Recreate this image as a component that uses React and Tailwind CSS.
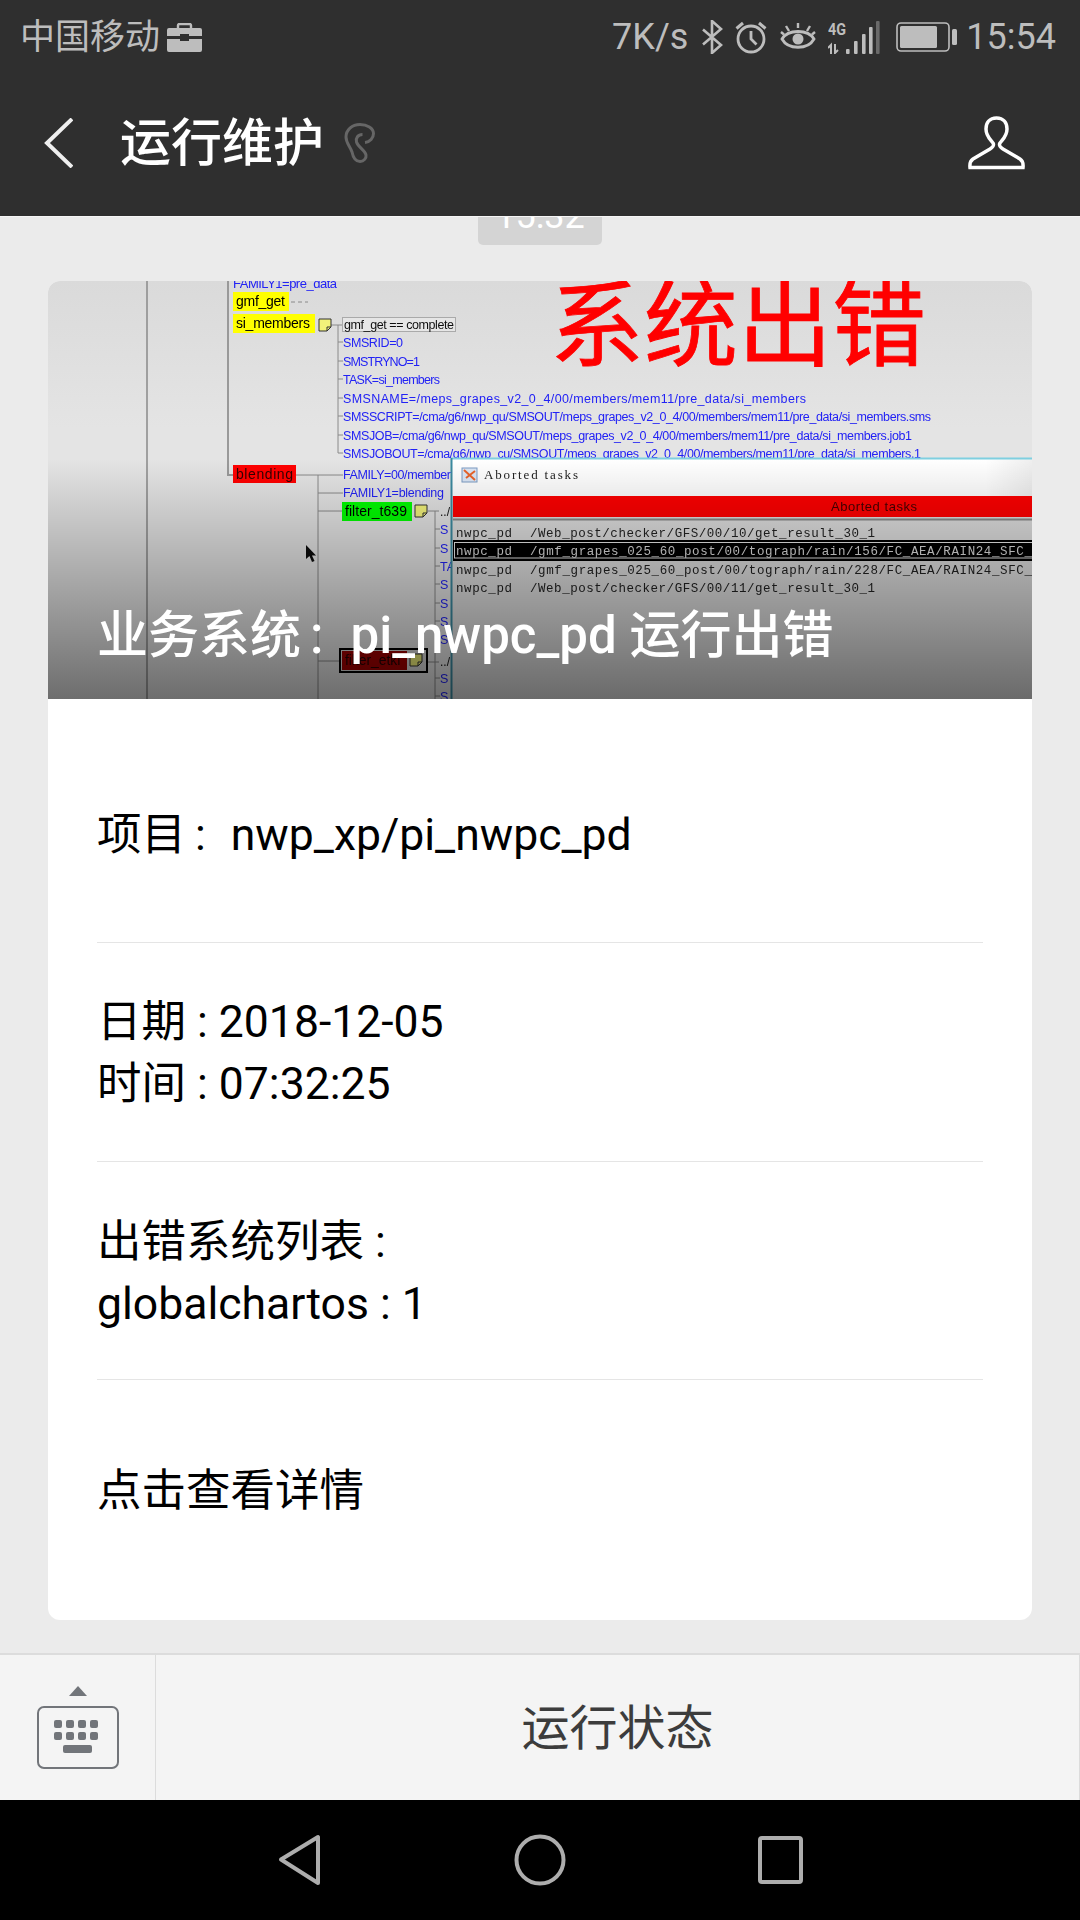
import React from 'react';

const BLUE = '#2222f5';
const SANS = "font-['Liberation_Sans',sans-serif]";

const paramRows = [
  { y: 61, text: 'SMSRID=0', w: 60 },
  { y: 80, text: 'SMSTRYNO=1', w: 77 },
  { y: 98, text: 'TASK=si_members', w: 97 },
  { y: 117, text: 'SMSNAME=/meps_grapes_v2_0_4/00/members/mem11/pre_data/si_members', w: 463 },
  { y: 135, text: 'SMSSCRIPT=/cma/g6/nwp_qu/SMSOUT/meps_grapes_v2_0_4/00/members/mem11/pre_data/si_members.sms', w: 588 },
  { y: 154, text: 'SMSJOB=/cma/g6/nwp_qu/SMSOUT/meps_grapes_v2_0_4/00/members/mem11/pre_data/si_members.job1', w: 569 },
  { y: 172, text: 'SMSJOBOUT=/cma/g6/nwp_cu/SMSOUT/meps_grapes_v2_0_4/00/members/mem11/pre_data/si_members.1', w: 578 },
];

const sideRows = [
  [248, 'S'], [267, 'S'], [285, 'TA'], [303, 'S'], [322, 'S'], [340, 'S'], [358, 'S'], [397, 'S'], [415, 'S'],
];

function Note({ x, y }) {
  return (
    <g>
      <path d={`M${x} ${y}h12v8l-4 4h-8z`} fill="#f2f27a" stroke="#333" strokeWidth="1" />
      <path d={`M${x + 8} ${y + 12}v-4h4`} fill="none" stroke="#333" strokeWidth="1" />
    </g>
  );
}

// the pasted monitoring-tool screenshot inside the card
function ErrorShot() {
  return (
    <svg viewBox="0 0 984 418" className="block w-full h-[418px]">
      <defs>
        <filter id="soft"><feGaussianBlur stdDeviation="0.35" /></filter>
        <linearGradient id="sheen" x1="0" y1="0" x2="0" y2="1">
          <stop offset="0" stopColor="#dadada" />
          <stop offset="0.35" stopColor="#e4e4e4" />
        </linearGradient>
        <linearGradient id="titlebar" x1="0" y1="0" x2="1" y2="0">
          <stop offset="0.92" stopColor="#ffffff" />
          <stop offset="1" stopColor="#efefef" />
        </linearGradient>
      </defs>
      <rect width="984" height="418" fill="url(#sheen)" />
      <g filter="url(#soft)">
        <g stroke="#8a8a8a" fill="none">
          <path d="M99 0V418" strokeWidth="1.5" />
          <path d="M180 0V194H185" strokeWidth="2" stroke="#999" />
          <path d="M290 44V172" />
          <path d="M283 44H294M290 61H295M290 80H295M290 98H295M290 117H295M290 135H295M290 154H295M290 172H295" />
          <path d="M248 194H295M270 194V418M270 212H295M270 230H294M270 380H291" />
          <path d="M380 230H391M387 230V418M387 248H392M387 267H392M387 285H392M387 303H392M387 322H392M387 340H392M387 358H392M380 381H391M387 397H392M387 415H392" />
          <path d="M243 21H260" strokeDasharray="4 3" />
        </g>

        <text x="185" y="7" fontSize="13" fill={BLUE} className={SANS} textLength="104">FAMILY1=pre_data</text>

        <rect x="185" y="11" width="56" height="19" fill="#ffff00" />
        <text x="188" y="25" fontSize="14" fill="#000" className={SANS} textLength="49">gmf_get</text>
        <rect x="185" y="33" width="82" height="19" fill="#ffff00" />
        <text x="188" y="47" fontSize="14" fill="#000" className={SANS} textLength="74">si_members</text>
        <Note x={271} y={38} />
        <rect x="294.5" y="36.5" width="113" height="14" fill="#e6e6e6" stroke="#aaa" />
        <text x="296" y="48" fontSize="12.5" fill="#111" className={SANS} textLength="110">gmf_get == complete</text>

        {paramRows.map((r) => (
          <text key={r.text} x="295" y={r.y + 4.5} fontSize="12.5" fill={BLUE} className={SANS} textLength={r.w}>{r.text}</text>
        ))}

        <rect x="185" y="184" width="63" height="18" fill="#ff0000" />
        <text x="188" y="198" fontSize="14" fill="#300" className={SANS} textLength="57">blending</text>
        <text x="295" y="198" fontSize="12.5" fill={BLUE} className={SANS} textLength="108">FAMILY=00/member</text>
        <text x="295" y="216" fontSize="12.5" fill={BLUE} className={SANS} textLength="101">FAMILY1=blending</text>

        <rect x="294" y="221" width="70" height="19" fill="#00ff00" />
        <text x="297" y="235" fontSize="14" fill="#000" className={SANS} textLength="62">filter_t639</text>
        <Note x={367} y={224} />
        <text x="392" y="235" fontSize="12" fill="#111" className={SANS}>../</text>

        {sideRows.map(([y, t]) => (
          <text key={y} x="392" y={y + 4.5} fontSize="12.5" fill={BLUE} className={SANS}>{t}</text>
        ))}

        <rect x="292" y="368" width="87" height="23" fill="#d8d8d8" stroke="#000" strokeWidth="2" />
        <rect x="294" y="370" width="65" height="19" fill="#a00000" />
        <text x="297" y="384" fontSize="14" fill="#200" className={SANS} textLength="56">filter_etkf</text>
        <Note x={362} y={373} />
        <text x="392" y="385" fontSize="12" fill="#111" className={SANS}>../</text>

        <path d="M258 264V278L261.5 275L264 281L266.5 280L264 274.5H268Z" fill="#111" />

        {/* aborted tasks window */}
        <rect x="403" y="177" width="581" height="241" fill="#dedede" />
        <rect x="403" y="178" width="581" height="37" fill="url(#titlebar)" />
        <path d="M403 177.5H984" stroke="#7fcfe0" strokeWidth="2" />
        <path d="M403.5 177V418" stroke="#3b8aa0" strokeWidth="2" />
        <rect x="414" y="187" width="15" height="14" fill="#dbe6f5" stroke="#7d9cc4" />
        <path d="M416 189L427 199M427 190L418 197" stroke="#e8642a" strokeWidth="2" />
        <text x="436" y="198" fontSize="13" fill="#222" className="font-['Liberation_Serif',serif]" textLength="94">Aborted tasks</text>

        <rect x="405" y="215" width="579" height="21" fill="#ff0000" />
        <text x="783" y="230" fontSize="13" fill="#400" className={SANS} textLength="86">Aborted tasks</text>
        <path d="M405 238.5H984" stroke="#8a8a8a" strokeWidth="2" />

        <rect x="405" y="259" width="579" height="21" fill="#000" />
        <rect x="406.5" y="261.5" width="578" height="15.5" fill="none" stroke="#e8e8e8" />

        <g fontSize="12.5" className="font-['Liberation_Mono',monospace]">
          <text x="408" y="256" fill="#222" textLength="56">nwpc_pd</text>
          <text x="482" y="256" fill="#222" textLength="345">/Web_post/checker/GFS/00/10/get_result_30_1</text>
          <text x="408" y="274" fill="#ddd" textLength="56">nwpc_pd</text>
          <text x="482" y="274" fill="#ddd" textLength="510">/gmf_grapes_025_60_post/00/tograph/rain/156/FC_AEA/RAIN24_SFC_R</text>
          <text x="408" y="293" fill="#222" textLength="56">nwpc_pd</text>
          <text x="482" y="293" fill="#222" textLength="510">/gmf_grapes_025_60_post/00/tograph/rain/228/FC_AEA/RAIN24_SFC_R</text>
          <text x="408" y="311" fill="#222" textLength="56">nwpc_pd</text>
          <text x="482" y="311" fill="#222" textLength="345">/Web_post/checker/GFS/00/11/get_result_30_1</text>
        </g>

        <text x="502" y="78" fontSize="94" fill="#ff0000" stroke="#ff0000" strokeWidth="0.8" className="font-['Noto_Sans_CJK_SC',sans-serif]">系统出错</text>
      </g>
    </svg>
  );
}

function StatusIcons() {
  return (
    <>
      <svg width="21" height="34" viewBox="0 0 21 34" fill="none" stroke="#bdbdbd" strokeWidth="2.6" className="ml-[14px]">
        <path d="M1 9.5L19 25L10 33V1L19 9L1 24.5" />
      </svg>
      <svg width="32" height="33" viewBox="0 0 32 33" fill="none" stroke="#bdbdbd" strokeWidth="2.8" className="ml-[12px]">
        <circle cx="16" cy="18" r="13" />
        <path d="M16 10V18L21.5 23.5" />
        <path d="M1.5 7.5L8 2M30.5 7.5L24 2" strokeWidth="3" />
      </svg>
      <svg width="36" height="31" viewBox="0 0 36 31" fill="none" stroke="#bdbdbd" strokeWidth="2.8" className="ml-[13px]">
        <path d="M2 17C8 7 28 7 34 17C28 28 8 28 2 17Z" />
        <circle cx="18" cy="17" r="5.5" fill="#bdbdbd" stroke="none" />
        <path d="M18 1V6M6 4L9 9M30 4L27 9M1 10L4 12.5M35 10L32 12.5" strokeWidth="2.4" />
      </svg>
      <svg width="52" height="33" viewBox="0 0 52 33" className="ml-[12px]">
        <text x="0" y="14" fontSize="17" fontWeight="700" fill="#bdbdbd" textLength="18" lengthAdjust="spacingAndGlyphs">4G</text>
        <path d="M3 33V24L0 27M7 23V32L10 29" stroke="#bdbdbd" strokeWidth="2" fill="none" />
        <rect x="18" y="28" width="3.6" height="5" rx="1" fill="#bdbdbd" />
        <rect x="26" y="20" width="3.6" height="13" rx="1" fill="#bdbdbd" />
        <rect x="34" y="13" width="3.6" height="20" rx="1" fill="#bdbdbd" />
        <rect x="41" y="6" width="3.6" height="27" rx="1" fill="#bdbdbd" />
        <rect x="48" y="0" width="3.6" height="33" rx="1" fill="#6a6a6a" />
      </svg>
      <svg width="61" height="30" viewBox="0 0 61 30" fill="none" className="ml-[16px]">
        <rect x="1" y="1" width="52" height="28" rx="4" stroke="#bdbdbd" strokeWidth="1.6" />
        <rect x="4" y="4" width="37" height="22" rx="1.5" fill="#bdbdbd" />
        <rect x="56" y="7" width="5" height="16" rx="1.5" fill="#bdbdbd" />
      </svg>
    </>
  );
}

function TopBar() {
  return (
    <div className="bg-[#2f2f2f] h-[216px] shrink-0">
      <div className="h-[74px] flex items-center justify-between pl-[20px] pr-[24px] text-[#bdbdbd]">
        <div className="flex items-center">
          <span className="text-[35px] leading-none">中国移动</span>
          <svg width="35" height="29" viewBox="0 0 35 29" className="ml-[7px]">
            <path d="M11 6V2.5A1.5 1.5 0 0 1 12.5 1H22.500A1.5 1.5 0 0 1 24 2.500V6" fill="none" stroke="#bdbdbd" strokeWidth="2.4" />
            <path d="M2 5H33a2 2 0 0 1 2 2V13H22V11H13V13H0V7a2 2 0 0 1 2-2Z" fill="#bdbdbd" />
            <path d="M0 16H13V18H22V16H35V27a2 2 0 0 1-2 2H2a2 2 0 0 1-2-2Z" fill="#bdbdbd" />
          </svg>
        </div>
        <div className="flex items-center">
          <span className="text-[36px] leading-none">7K/s</span>
          <StatusIcons />
          <span className="ml-[9px] text-[36px] leading-none">15:54</span>
        </div>
      </div>
      <div className="h-[138px] flex items-center pl-[44px] pr-[55px]">
        <svg width="29" height="50" viewBox="0 0 29 50" fill="none" stroke="#efefef" strokeWidth="4">
          <path d="M28 1L3 25L28 49" />
        </svg>
        <span className="ml-[47px] text-[51px] leading-none font-medium text-white">运行维护</span>
        <svg width="31" height="40" viewBox="0 0 31 40" fill="none" stroke="#666" strokeWidth="3" className="ml-[20px]">
          <path d="M21 19.500C26 19 29.500 15 29.500 10.500C29.500 5 23 1.500 16 1.500C8 1.500 2 7 2 14C2 20 6 23 8 29C9 34 11 38.500 16 38.500C20 38.500 22.500 35 22 32C21 27 14 24 12.500 19C11.500 15 14 11.500 18.500 11.500" />
        </svg>
        <svg width="57" height="54" viewBox="0 0 57 54" fill="none" stroke="#fff" strokeWidth="3.500" className="ml-auto">
          <path d="M28.500 2C21.500 2 18 7 18 13C18 20 22 23 25 27C26.500 29.500 25 31 22 33L5 43C2 45 1.500 47 2 51.500H55C55.500 47 55 45 52 43L35 33C32 31 30.500 29.500 32 27C35 23 39 20 39 13C39 7 35.500 2 28.500 2Z" />
        </svg>
      </div>
    </div>
  );
}

function BottomBar() {
  return (
    <div className="shrink-0">
      <div className="h-[147px] bg-[#f4f4f4] border-t-2 border-[#dcdcdc] flex border-r border-r-[#dcdcdc]">
        <div className="w-[156px] border-r border-[#dcdcdc] flex flex-col items-center pt-[31px]">
          <svg width="18" height="10" viewBox="0 0 18 10" className="block">
            <path d="M9 0L18 10H0Z" fill="#72757a" />
          </svg>
          <svg width="82" height="63" viewBox="0 0 82 63" className="block mt-[10px]">
            <rect x="1" y="1" width="80" height="61" rx="6" fill="none" stroke="#72757a" strokeWidth="2" />
            {[17, 29, 41, 53].map((x) => (
              <g key={x} fill="#72757a">
                <rect x={x} y="14" width="8" height="8" rx="2" />
                <rect x={x} y="26" width="8" height="8" rx="2" />
              </g>
            ))}
            <rect x="26" y="39" width="29" height="8" rx="2" fill="#72757a" />
          </svg>
        </div>
        <div className="flex-1 flex items-center justify-center text-[48px] leading-none text-[#3c3c3c] pt-[3px]">运行状态</div>
      </div>
      <div className="h-[120px] bg-black flex items-center">
        <svg width="1080" height="120" viewBox="0 0 1080 120" fill="none" stroke="#adadad" strokeWidth="4" strokeLinejoin="round" className="block">
          <path d="M318 37V83L281 59.500Z" />
          <circle cx="540" cy="60" r="23.500" />
          <rect x="760" y="38" width="41" height="44" rx="2" />
        </svg>
      </div>
    </div>
  );
}

export default function App() {
  return (
    <div className="w-[1080px] h-[1920px] flex flex-col bg-[#ebebeb] overflow-hidden font-['Roboto','Noto_Sans_CJK_SC',sans-serif]">
      <TopBar />
      <div className="flex-1 border-t border-[#f5f5f5] flex flex-col items-center">
        <div className="w-[124px] h-[28px] rounded-b-[5px] bg-[#d4d4d4] overflow-hidden flex justify-center">
          <span className="text-[36px] leading-[40px] text-white -mt-[21px]">15:32</span>
        </div>
        <div className="w-[984px] mt-[36px] bg-white rounded-[12px] overflow-hidden">
          <div className="relative h-[418px]">
            <ErrorShot />
            <div className="absolute inset-x-0 bottom-0 h-[240px] bg-linear-to-b from-transparent to-[rgba(0,0,0,0.52)]" />
            <div className="absolute left-[49px] top-[324px] flex text-[51px] leading-[62px] font-medium text-white whitespace-pre">
              <span>业务系统</span>
              <span className="ml-[9px] mr-[27px]">:</span>
              <span>pi_nwpc_pd 运行出错</span>
            </div>
          </div>
          <div className="pl-[49px] pr-[49px] text-[44.5px] leading-[62px] text-black">
            <div className="flex pt-[105px] pb-[76px] border-b border-[#e5e5e5]">
              <span>项目</span>
              <span className="ml-[9px] mr-[25px]">:</span>
              <span>nwp_xp/pi_nwpc_pd</span>
            </div>
            <div className="pt-[48px] pb-[46px] border-b border-[#e5e5e5]">
              <div>日期 : 2018-12-05</div>
              <div>时间 : 07:32:25</div>
            </div>
            <div className="pt-[49px] pb-[44px] border-b border-[#e5e5e5]">
              <div>出错系统列表 :</div>
              <div>globalchartos : 1</div>
            </div>
            <div className="pt-[80px] pb-[98px]">点击查看详情</div>
          </div>
        </div>
      </div>
      <BottomBar />
    </div>
  );
}
